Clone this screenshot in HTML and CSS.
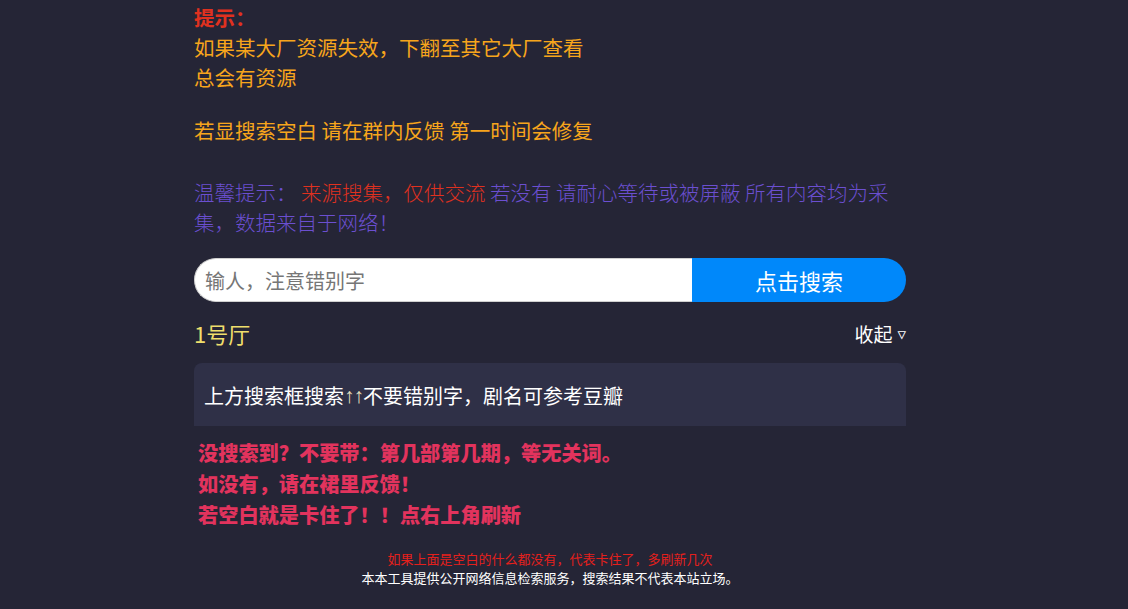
FILE: index.html
```html
<!DOCTYPE html>
<html lang="zh-CN">
<head>
<meta charset="utf-8">
<title>搜索</title>
<link rel="stylesheet" href="styles.css">
</head>
<body>
<div class="page">
  <main class="wrap">
    <section class="notice">
      <p class="tip"><b class="tip-title">提示：</b><br>如果某大厂资源失效，下翻至其它大厂查看<br>总会有资源</p>
      <p class="tip tip-second">若显搜索空白 请在群内反馈 第一时间会修复</p>
      <p class="warm">温馨提示： <span class="warm-red">来源搜集，仅供交流</span> 若没有 请耐心等待或被屏蔽 所有内容均为采集，数据来自于网络！</p>
    </section>

    <form class="search" onsubmit="return false;">
      <input class="search-input" type="text" placeholder="输人，注意错别字">
      <button class="search-btn" type="submit">点击搜索</button>
    </form>

    <div class="hall-head">
      <span class="hall-name">1号厅</span>
      <span class="hall-toggle">收起<span class="tri">▿</span></span>
    </div>

    <div class="hall-card">上方搜索框搜索<span class="arr">↑↑</span>不要错别字，剧名可参考豆瓣</div>

    <div class="hint">
      <p>没搜索到？不要带：第几部第几期，等无关词。</p>
      <p>如没有，请在裙里反馈！</p>
      <p>若空白就是卡住了！！点右上角刷新</p>
    </div>
  </main>

  <footer class="foot">
    <p class="foot-red">如果上面是空白的什么都没有，代表卡住了，多刷新几次</p>
    <p class="foot-white">本本工具提供公开网络信息检索服务，搜索结果不代表本站立场。</p>
  </footer>
</div>
</body>
</html>
```

FILE: styles.css
```css
html, body {
  margin: 0;
  padding: 0;
  background: #252536;
}

body {
  font-family: "Noto Sans CJK SC", "Noto Sans", "Liberation Sans", sans-serif;
  color: #ffffff;
  min-height: 609px;
}

.page {
  width: 1100px;
}

.wrap {
  width: 712px;
  margin: 0 auto;
  padding-top: 2px;
}

p {
  margin: 0;
}

.tip {
  font-size: 20.5px;
  line-height: 30px;
  color: #f7a51c;
}

.tip-title {
  color: #e0311f;
  font-weight: 700;
}

.tip-second {
  margin-top: 23px;
}

.warm {
  margin-top: 32px;
  font-size: 20.5px;
  line-height: 30px;
  color: #6b4fd0;
  font-weight: 300;
}

.warm-red {
  color: #e0311f;
  line-height: 1;
}

.search {
  display: flex;
  height: 44px;
  margin-top: 21px;
}

.search-input {
  flex: 1;
  min-width: 0;
  box-sizing: border-box;
  height: 44px;
  margin: 0;
  padding: 0 10px;
  border: 1px solid #d0d0d0;
  border-right: none;
  border-radius: 22px 0 0 22px;
  background: #ffffff;
  font-family: inherit;
  font-size: 20px;
  color: #333;
  outline: none;
}

.search-input::placeholder {
  color: #767676;
}

.search-btn {
  width: 214px;
  height: 44px;
  margin: 0;
  border: none;
  border-radius: 0 22px 22px 0;
  background: #0088fa;
  color: #ffffff;
  font-family: inherit;
  font-size: 22px;
  cursor: pointer;
}

.hall-head {
  display: flex;
  justify-content: space-between;
  align-items: center;
  height: 34px;
  margin: 14px 0 13px;
}

.hall-name {
  font-size: 22px;
  color: #efde6c;
}

.hall-toggle {
  display: flex;
  align-items: center;
  font-size: 19px;
  color: #ffffff;
}

.tri {
  font-family: "DejaVu Sans", sans-serif;
  font-size: 17px;
  margin-left: 5px;
  margin-top: 2px;
}

.hall-card {
  display: flex;
  align-items: center;
  height: 63px;
  padding: 2px 10px 0;
  box-sizing: border-box;
  background: #2f3047;
  border-radius: 8px 8px 0 0;
  font-size: 20px;
  color: #ffffff;
}

.arr {
  font-family: "Liberation Sans", sans-serif;
  color: #e8e0c0;
  font-size: 21px;
  letter-spacing: -1px;
}

.hint {
  margin-top: 11px;
  padding-left: 4px;
}

.hint p {
  font-size: 20.2px;
  line-height: 31px;
  font-weight: 900;
  color: #e2335d;
}

.foot {
  margin-top: 19px;
  text-align: center;
  font-size: 13px;
  line-height: 19px;
}

.foot-red {
  color: #e4201c;
}

.foot-white {
  color: #ffffff;
}
```
